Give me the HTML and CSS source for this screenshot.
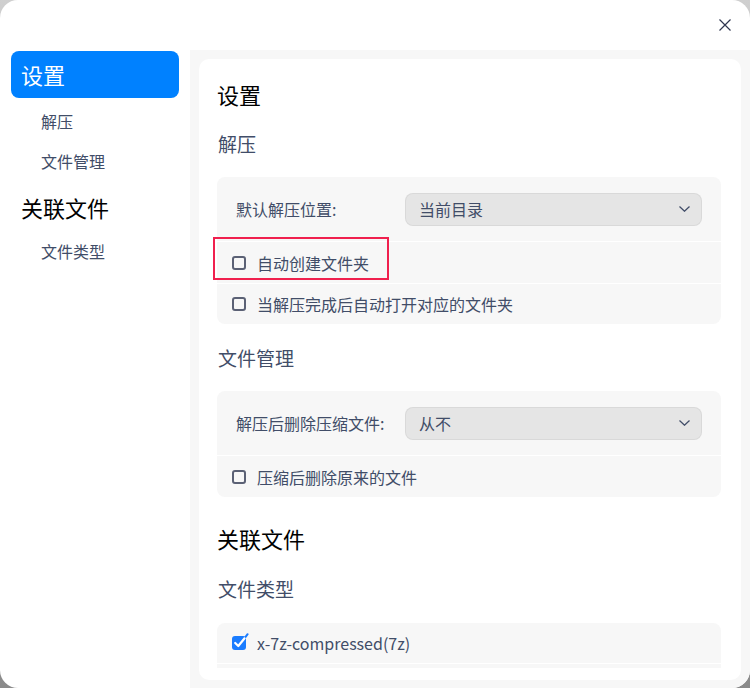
FILE: index.html
```html
<!DOCTYPE html>
<html lang="zh-CN">
<head>
<meta charset="utf-8">
<title>设置</title>
<link rel="stylesheet" href="styles.css">
</head>
<body>
<div class="window">
  <div class="titlebar">
    <button class="close" aria-label="关闭">
      <svg width="12" height="12" viewBox="0 0 12 12"><path d="M0.5 0.5 L11.5 11.5 M11.5 0.5 L0.5 11.5" stroke="#2f3650" stroke-width="1.2" fill="none"/></svg>
    </button>
  </div>
  <div class="main">
    <nav class="sidebar">
      <div class="nav-title active">设置</div>
      <div class="nav-item">解压</div>
      <div class="nav-item">文件管理</div>
      <div class="nav-title">关联文件</div>
      <div class="nav-item">文件类型</div>
    </nav>
    <div class="content">
      <div class="panel">
        <div class="scroll">
          <h1 class="title">设置</h1>
          <h2 class="section">解压</h2>
          <div class="group">
            <div class="row row-combo">
              <span class="label">默认解压位置:</span>
              <div class="combo"><span>当前目录</span>
                <svg class="chev" width="11" height="6" viewBox="0 0 11 6"><path d="M0.5 0.5 L5.5 5.2 L10.5 0.5" stroke="#414d68" stroke-width="1.3" fill="none"/></svg>
              </div>
            </div>
            <div class="row row-check">
              <span class="box"></span><span>自动创建文件夹</span>
            </div>
            <div class="row row-check">
              <span class="box"></span><span>当解压完成后自动打开对应的文件夹</span>
            </div>
            <div class="highlight"></div>
          </div>
          <h2 class="section">文件管理</h2>
          <div class="group">
            <div class="row row-combo">
              <span class="label">解压后删除压缩文件:</span>
              <div class="combo"><span>从不</span>
                <svg class="chev" width="11" height="6" viewBox="0 0 11 6"><path d="M0.5 0.5 L5.5 5.2 L10.5 0.5" stroke="#414d68" stroke-width="1.3" fill="none"/></svg>
              </div>
            </div>
            <div class="row row-check">
              <span class="box"></span><span>压缩后删除原来的文件</span>
            </div>
          </div>
          <h1 class="title title-gap">关联文件</h1>
          <h2 class="section section-gap">文件类型</h2>
          <div class="group">
            <div class="row row-check">
              <svg class="checked" width="17" height="17" viewBox="0 0 17 17">
                <rect x="0" y="3" width="14" height="14" rx="3" fill="#1a7cff"/>
                <path d="M3.2 10 L6.3 13 L12.6 5.2" stroke="#fff" stroke-width="2.2" fill="none" stroke-linecap="round" stroke-linejoin="round"/>
                <path d="M13.6 3.8 L15.6 1.2" stroke="#1a7cff" stroke-width="2" fill="none" stroke-linecap="round"/>
              </svg>
              <span class="latin">x-7z-compressed(7z)</span>
            </div>
            <div class="row row-check"></div>
          </div>
        </div>
      </div>
    </div>
  </div>
</div>
</body>
</html>
```

FILE: styles.css
```css
html {
  background: linear-gradient(#cfcfcf, #8a8a8a);
  height: 100%;
}
body {
  margin: 0;
  font-family: "Noto Sans CJK SC", "Noto Sans", sans-serif;
  color: #414d68;
}
.window {
  width: 750px;
  height: 688px;
  background: #fff;
  border-radius: 18px;
  overflow: hidden;
  display: flex;
  flex-direction: column;
}
.titlebar {
  height: 50px;
  flex: none;
  display: flex;
  justify-content: flex-end;
  align-items: flex-start;
}
.close {
  width: 30px;
  height: 30px;
  margin: 10px 10px 0 0;
  border: 0;
  background: none;
  padding: 0;
  display: flex;
  align-items: center;
  justify-content: center;
}
.main {
  flex: 1;
  display: flex;
  min-height: 0;
}
.sidebar {
  width: 190px;
  flex: none;
  padding: 1px 11px 0 11px;
  box-sizing: border-box;
  display: flex;
  flex-direction: column;
}
.nav-title {
  height: 47px;
  line-height: 46px;
  font-size: 22px;
  color: #000;
  padding-left: 10px;
  border-radius: 8px;
  margin-top: 3px;
}
.nav-title.active {
  background: #0081ff;
  color: #fff;
  margin-top: 0;
  margin-bottom: 3px;
}
.nav-item {
  height: 40px;
  line-height: 40px;
  font-size: 16px;
  padding-left: 30px;
  color: #414d68;
}
.content {
  flex: 1;
  background: #f7f7f7;
  padding: 9px 9px 8px 9px;
  display: flex;
}
.panel {
  flex: 1;
  background: #fff;
  border-radius: 10px;
  padding-bottom: 12px;
  display: flex;
  flex-direction: column;
  overflow: hidden;
}
.scroll {
  flex: 1;
  overflow: hidden;
  padding: 20px 20px 0 18px;
  display: flex;
  flex-direction: column;
}
.title {
  margin: 0;
  font-size: 22px;
  line-height: 30px;
  font-weight: normal;
  color: #000;
}
.title-gap {
  margin-top: 26px;
}
.section {
  margin: 21px 0 19px 1px;
  font-size: 19px;
  line-height: 28px;
  font-weight: normal;
  color: #414d68;
}
.group + .section {
  margin-top: 20px;
  margin-bottom: 19px;
}
.section.section-gap {
  margin-top: 22px;
  margin-bottom: 20px;
}
.group {
  position: relative;
  background: #f7f7f7;
  border-radius: 8px;
  display: flex;
  flex-direction: column;
  flex: none;
}
.row {
  display: flex;
  align-items: center;
  font-size: 16px;
  color: #414d68;
}
.row + .row {
  border-top: 1px solid #fff;
}
.row-combo {
  height: 64px;
  padding: 0 19px;
}
.row-combo + .row-check {
  height: 41px;
}
.row-check {
  height: 40px;
  padding-left: 15px;
  gap: 11px;
}
.label {
  width: 169px;
  flex: none;
}
.combo {
  flex: 1;
  height: 33px;
  box-sizing: border-box;
  background: #e5e5e5;
  border: 1px solid rgba(0, 0, 0, 0.05);
  border-radius: 8px;
  display: flex;
  align-items: center;
  justify-content: space-between;
  padding: 0 11px 0 13px;
}
.box {
  width: 14px;
  height: 14px;
  box-sizing: border-box;
  border: 2px solid #5b6175;
  border-radius: 3px;
  flex: none;
}
.checked {
  flex: none;
  margin-top: -3px;
  margin-right: -3px;
}
.latin {
  font-size: 16px;
}
.highlight {
  position: absolute;
  left: -4px;
  top: 60px;
  width: 176px;
  height: 43px;
  box-sizing: border-box;
  border: 2px solid #f0204e;
}
```
